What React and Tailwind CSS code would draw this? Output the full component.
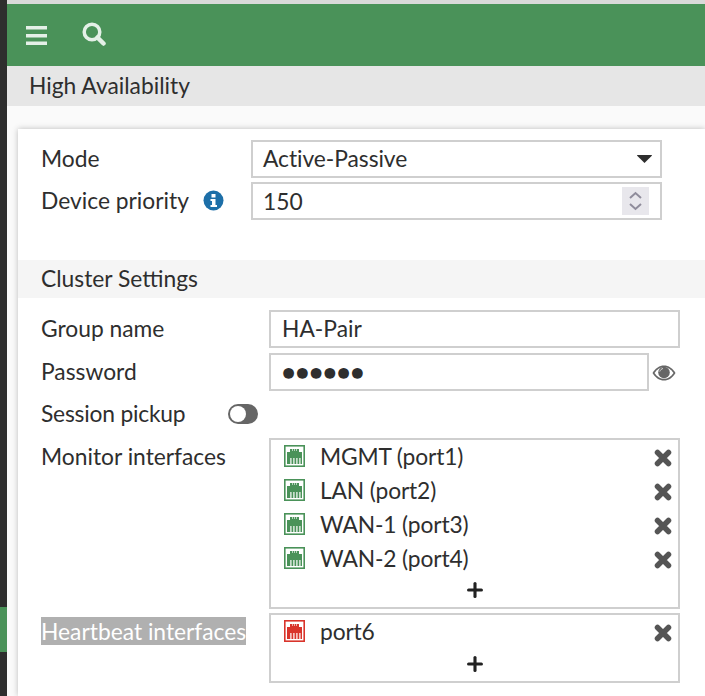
import { Plus } from 'lucide-react';

const monitorPorts = ['MGMT (port1)', 'LAN (port2)', 'WAN-1 (port3)', 'WAN-2 (port4)'];

// Port icon, green for monitor interfaces and red for heartbeat
const PortIcon = ({ color }) => (
	<svg width="21" height="22" viewBox="0 0 21 22" className="shrink-0 mb-[2px]">
		<rect x="0.800" y="0.800" width="19.400" height="20.400" fill="#fff" stroke={color} strokeWidth="1.600" />
		<path
			d="M3 19V7h3V4h9v3h3v12h-1.500v-6h-1.200v6h-1.800v-6h-1.200v6h-1.800v-6H9.300v6H7.500v-6H6.300v6H3z"
			fill={color}
		/>
		<path d="M8 4h1v2H8zM10 4h1v2h-1zM12 4h1v2h-1z" fill="#fff" opacity="0.6" />
	</svg>
);

const RemoveIcon = () => (
	<svg width="18" height="18" viewBox="0 0 18 18" className="shrink-0 mt-[1px]">
		<path d="M3.500 3.500L14.500 14.500M14.500 3.500L3.500 14.500" stroke="#555" strokeWidth="5.500" strokeLinecap="round" />
	</svg>
);

const PortRow = ({ name, color }) => (
	<div className="flex items-center h-[34px] pl-[13px] pr-[6px]">
		<PortIcon color={color} />
		<span className="ml-[15px] flex-1 pb-[2px] tracking-[-0.15px]">{name}</span>
		<RemoveIcon />
	</div>
);

const AddRow = ({ className }) => (
	<div className={`flex justify-center ${className}`}>
		<Plus size={22} strokeWidth={3.4} color="#222" />
	</div>
);

const App = () => {
	return (
		<div className="w-[705px] h-[696px] overflow-hidden flex bg-[#fafafa] text-[22.8px] leading-[28px] text-[#2e2e2e] font-['Lato',sans-serif]">
			<aside className="w-[7px] shrink-0 bg-[#2e2e2e] flex flex-col pt-[607px]">
				<div className="h-[45px] bg-[#4a9259]" />
			</aside>

			<main className="flex-1 min-w-0 flex flex-col">
				<div className="h-[4px] bg-[#d9d9d9]" />
				<header className="h-[62px] bg-[#4a9259] flex items-center pl-[19px]">
					<svg width="21" height="19" viewBox="0 0 21 19" fill="#e4f0e7">
						<rect y="0" width="21" height="3.500" />
						<rect y="8" width="21" height="3.500" />
						<rect y="15.500" width="21" height="3.500" />
					</svg>
					<svg width="24" height="24" viewBox="0 0 24 24" fill="none" stroke="#e4f0e7" className="ml-[35px] mb-[2px]">
						<circle cx="10" cy="10" r="7.800" strokeWidth="3.500" />
						<path d="M15.500 15.500L21.500 21.500" strokeWidth="4.500" strokeLinecap="round" />
					</svg>
				</header>
				<div className="h-[40px] bg-[#e6e6e6] flex items-center pl-[22px] pb-[2px]">High Availability</div>

				<section className="mt-[23px] ml-[11px] flex-1 bg-white shadow-[0_0_6px_rgba(0,0,0,0.25)]">
					<div className="pt-[11px] pl-[23px]">
						<div className="flex items-center">
							<label className="w-[210px] pb-[2px]">Mode</label>
							<div className="w-[411px] h-[38px] border-2 border-[#cfcfcf] flex items-center pl-[10px] pr-[8px] pb-[2px]">
								<span className="flex-1 tracking-[-0.05px]">Active-Passive</span>
								<svg width="15" height="8" viewBox="0 0 15 8" className="mt-[2px]">
									<path d="M0.500 0h14a.5.5 0 0 1 .3.8L7.500 8 .2.800A.5.5 0 0 1 .5 0z" fill="#2e2e2e" />
								</svg>
							</div>
						</div>
						<div className="flex items-center mt-[4px]">
							<label className="w-[210px] flex items-center">
								<span className="pb-[2px]">Device priority</span>
								<svg width="21" height="21" viewBox="0 0 21 21" className="ml-[14px] mb-[2px]">
									<circle cx="10.500" cy="10.500" r="10" fill="#1d6fa8" />
									<rect x="8.500" y="4" width="4" height="3.500" fill="#fff" />
									<path d="M7.500 9h5v6h1.500v2H7.500v-2H9v-4H7.500z" fill="#fff" />
								</svg>
							</label>
							<div className="w-[411px] h-[38px] border-2 border-[#cfcfcf] flex items-center pl-[10px] pr-[11px]">
								<span className="flex-1">150</span>
								<div className="w-[27px] h-[28px] bg-[#e8e7ec] flex items-center justify-center">
									<svg width="15" height="24" viewBox="0 0 15 24" fill="none" stroke="#8f8c9b" strokeWidth="2">
										<path d="M2 9l5.500-5L13 9M2 15l5.500 5 5.500-5" />
									</svg>
								</div>
							</div>
						</div>
					</div>

					<h2 className="mt-[40px] h-[38px] bg-[#f5f5f5] flex items-center pl-[23px] pb-[2px] font-normal">Cluster Settings</h2>

					<div className="pt-[12px] pl-[23px]">
						<div className="flex items-center">
							<label className="w-[228px] pb-[2px]">Group name</label>
							<div className="w-[411px] h-[38px] border-2 border-[#cfcfcf] flex items-center pl-[11px] pb-[2px]">HA-Pair</div>
						</div>
						<div className="flex items-center mt-[5px]">
							<label className="w-[228px] pb-[2px]">Password</label>
							<div className="w-[380px] h-[38px] border-2 border-[#cfcfcf] flex items-center pl-[11px] text-[22px] tracking-[0.55px]">
								●●●●●●
							</div>
							<svg width="24" height="16" viewBox="0 0 24 16" className="ml-[3px] mt-[1px]">
								<path d="M0.500 8C3.500 3 7.500 0.500 12 0.500S20.500 3 23.500 8C20.500 13 16.500 15.500 12 15.500S3.500 13 0.500 8z" fill="#666" />
								<path d="M2.500 8C5 4.200 8 2.200 12 2.200S19 4.200 21.500 8C19 11.800 16 13.800 12 13.800S5 11.800 2.500 8z" fill="#fff" />
								<circle cx="12" cy="7.500" r="5.800" fill="#666" />
								<path d="M7.800 6.500C8.300 4.800 9.600 3.800 11 3.500" stroke="#ddd" strokeWidth="1" fill="none" />
							</svg>
						</div>
						<div className="flex items-center h-[38px] mt-[4px]">
							<label className="w-[187px] pb-[2px] tracking-[-0.2px]">Session pickup</label>
							<div className="w-[30px] h-[20px] rounded-full border-2 border-[#666] bg-[#666] flex">
								<div className="w-[16px] h-[16px] rounded-full bg-white" />
							</div>
						</div>
						<div className="flex mt-[5px]">
							<label className="w-[228px] pt-[4px]">Monitor interfaces</label>
							<div className="w-[411px] h-[171px] border-2 border-[#cfcfcf]">
								{monitorPorts.map(port => (
									<PortRow key={port} name={port} color="#4a9259" />
								))}
								<AddRow className="mt-[3px]" />
							</div>
						</div>
						<div className="flex mt-[4px]">
							<label className="w-[228px] pt-[4px]">
								<span className="bg-[#b0b0b0] text-white">Heartbeat interfaces</span>
							</label>
							<div className="w-[411px] h-[70px] border-2 border-[#cfcfcf]">
								<PortRow name="port6" color="#d9342b" />
								<AddRow className="mt-[4px]" />
							</div>
						</div>
					</div>
				</section>
			</main>
		</div>
	);
};

export default App;
